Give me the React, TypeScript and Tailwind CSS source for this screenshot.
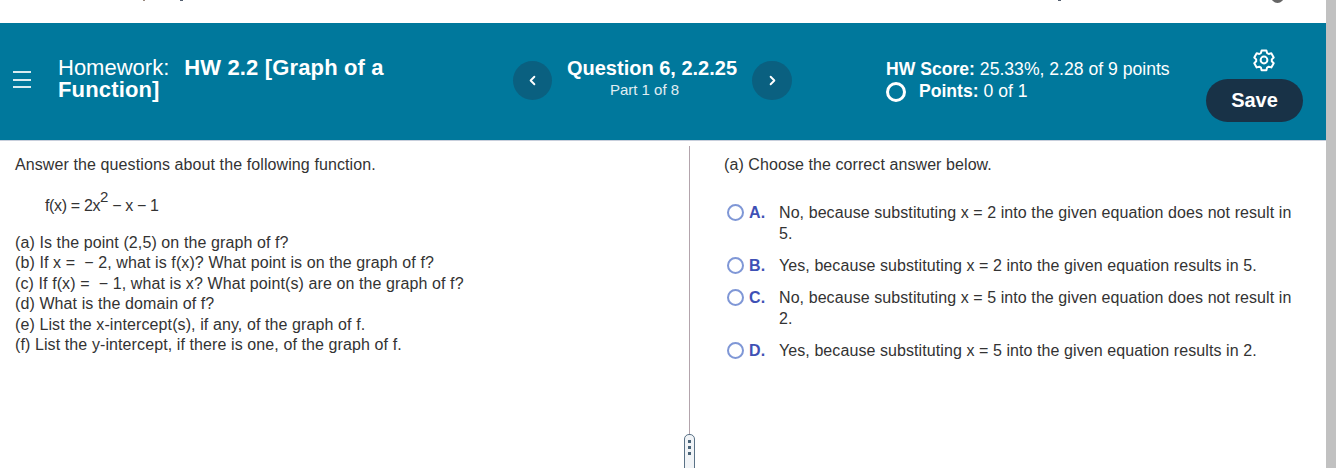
import React from "react";
import { ChevronLeft, ChevronRight } from "lucide-react";

const choices = [
  { letter: "A.", text: "No, because substituting x = 2 into the given equation does not result in 5.", h: "h-[42px]" },
  { letter: "B.", text: "Yes, because substituting x = 2 into the given equation results in 5.", h: "h-[21px]" },
  { letter: "C.", text: "No, because substituting x = 5 into the given equation does not result in 2.", h: "h-[42px]" },
  { letter: "D.", text: "Yes, because substituting x = 5 into the given equation results in 2.", h: "h-[21px]" },
];

const questions = [
  "(a) Is the point (2,5) on the graph of f?",
  "(b) If x =  − 2, what is f(x)? What point is on the graph of f?",
  "(c) If f(x) =  − 1, what is x? What point(s) are on the graph of f?",
  "(d) What is the domain of f?",
  "(e) List the x-intercept(s), if any, of the graph of f.",
  "(f) List the y-intercept, if there is one, of the graph of f.",
];

const GearIcon = () => (
  <svg width="24" height="24" viewBox="0 0 24 24" fill="none" stroke="white" strokeWidth="2" strokeLinejoin="round">
    <path d="M9.6 3h4.8l.7 2.6 1.6.9 2.6-.7 2.4 4.2-1.9 1.9v1.9l1.9 1.9-2.4 4.2-2.6-.7-1.6.9-.7 2.6H9.6l-.7-2.6-1.6-.9-2.6.7-2.4-4.2 1.9-1.9v-1.9L2.3 10l2.4-4.2 2.6.7 1.6-.9z" transform="translate(0 -0.5)" />
    <circle cx="12" cy="12" r="3.4" />
  </svg>
);

const App = () => {
  return (
    <div className="relative h-[468px] w-[1336px] overflow-hidden bg-white font-['Liberation_Sans',Arial,sans-serif] text-[#333]">
      <div className="flex h-[468px] w-[1326px] flex-col">
        <div className="h-[23px] shrink-0" />

        {/* header */}
        <div className="flex h-[118px] shrink-0 border-b border-[#c8cfdc] bg-[#00789c] text-white">
          <div className="flex w-[58px] shrink-0 items-start pl-[13px] pt-[48px]">
            <div className="flex h-[17px] w-[18px] flex-col justify-between">
              <div className="h-[2px] bg-white/85" />
              <div className="h-[2px] bg-white/85" />
              <div className="h-[2px] bg-white/85" />
            </div>
          </div>

          <div className="w-[350px] shrink-0 pt-[34px] text-[22px] leading-[22px] font-bold tracking-[0.15px]">
            <div className="flex">
              <span className="font-normal tracking-normal">Homework:</span>
              <span className="ml-[15px]">HW 2.2 [Graph of a</span>
            </div>
            <div>Function]</div>
          </div>

          <div className="ml-[105px] flex w-[279px] shrink-0 items-start pt-[38px]">
            <div className="flex h-[39px] w-[39px] shrink-0 items-center justify-center rounded-full bg-[#0a6080]">
              <ChevronLeft size={15} strokeWidth={3} />
            </div>
            <div className="w-[200px] shrink-0 text-center">
              <div className="-mt-[5px] text-[20px] leading-[24px] font-bold">Question 6, 2.2.25</div>
              <div className="pr-[15px] text-[15px] leading-[20px] text-[#e0eef3]">Part 1 of 8</div>
            </div>
            <div className="flex h-[39px] w-[40px] shrink-0 items-center justify-center rounded-full bg-[#0a6080]">
              <ChevronRight size={15} strokeWidth={3} />
            </div>
          </div>

          <div className="ml-[94px] w-[320px] shrink-0 pt-[35px] text-[17.6px]">
            <div className="leading-[22px]">
              <span className="font-bold">HW Score:</span> 25.33%, 2.28 of 9 points
            </div>
            <div className="flex items-center leading-[22px]">
              <div className="mt-[2px] h-[20px] w-[20px] rounded-full border-[3px] border-white" />
              <span className="ml-[13px] font-bold">Points:</span>&nbsp;0 of 1
            </div>
          </div>

          <div className="flex w-[98px] shrink-0 flex-col items-center pt-[25px]">
            <div className="ml-[18px]">
              <GearIcon />
            </div>
            <div className="mt-[7px] flex h-[43px] w-[97px] items-center justify-center self-start rounded-full bg-[#183247] pb-[2px] text-[20px] font-bold">
              Save
            </div>
          </div>
        </div>

        {/* question + answer panes */}
        <div className="flex min-h-0 flex-1 pt-[5px]">
          <div className="w-[689px] shrink-0 pl-[15px] pt-[9px] text-[16px] leading-[20.5px] tracking-[0.1px]">
            <div>Answer the questions about the following function.</div>
            <div className="mt-[20px] pl-[30px] leading-[20px] tracking-[-0.35px]">
              f(x) = 2x<sup className="-top-[9px] text-[15px] leading-none">2</sup> − x − 1
            </div>
            <div className="mt-[17px]">
              {questions.map((line) => (
                <div key={line} className="whitespace-pre">
                  {line}
                </div>
              ))}
            </div>
          </div>

          <div className="min-w-0 flex-1 border-l border-[#b3a4ac] pl-[34px] pt-[9px] text-[16px] leading-[21px] tracking-[0.08px]">
            <div className="leading-[20.5px]">(a) Choose the correct answer below.</div>
            <div className="mt-[26px] flex flex-col gap-[11px]">
              {choices.map((c) => (
                <div key={c.letter} className={`flex ${c.h}`}>
                  <div className="mt-[2px] ml-[3px] h-[17px] w-[17px] shrink-0 rounded-full border-2 border-[#7f97d6]" />
                  <div className="ml-[5px] w-[30px] shrink-0 font-bold text-[#3f51b5]">{c.letter}</div>
                  <div className="w-[525px]">{c.text}</div>
                </div>
              ))}
            </div>
          </div>
        </div>
      </div>

      {/* splitter handle */}
      <div className="absolute left-[684px] top-[434px] flex h-[50px] w-[11px] flex-col items-center gap-[3px] rounded-t-[5px] border-[1.5px] border-[#5a7286] bg-[#f1f4f7] pt-[5px]">
        <div className="h-[3px] w-[3px] bg-[#4a6478]" />
        <div className="h-[3px] w-[3px] bg-[#4a6478]" />
        <div className="h-[3px] w-[3px] bg-[#4a6478]" />
      </div>

      {/* bits of the page above, cut off at the top edge */}
      <div className="absolute left-[143px] top-0 h-[1px] w-[2px] bg-[#9a8a80]" />
      <div className="absolute left-[180px] top-0 h-[1px] w-[3px] bg-[#556070]" />
      <div className="absolute left-[1058px] top-0 h-[1px] w-[3px] bg-[#556070]" />
      <div className="absolute left-[1271px] top-[-10px] h-[13px] w-[13px] rounded-full bg-[#666]" />

      {/* scrollbar */}
      <div className="absolute right-0 top-0 h-[468px] w-[10px] bg-[#c1c1c1]" />
    </div>
  );
};

export default App;
